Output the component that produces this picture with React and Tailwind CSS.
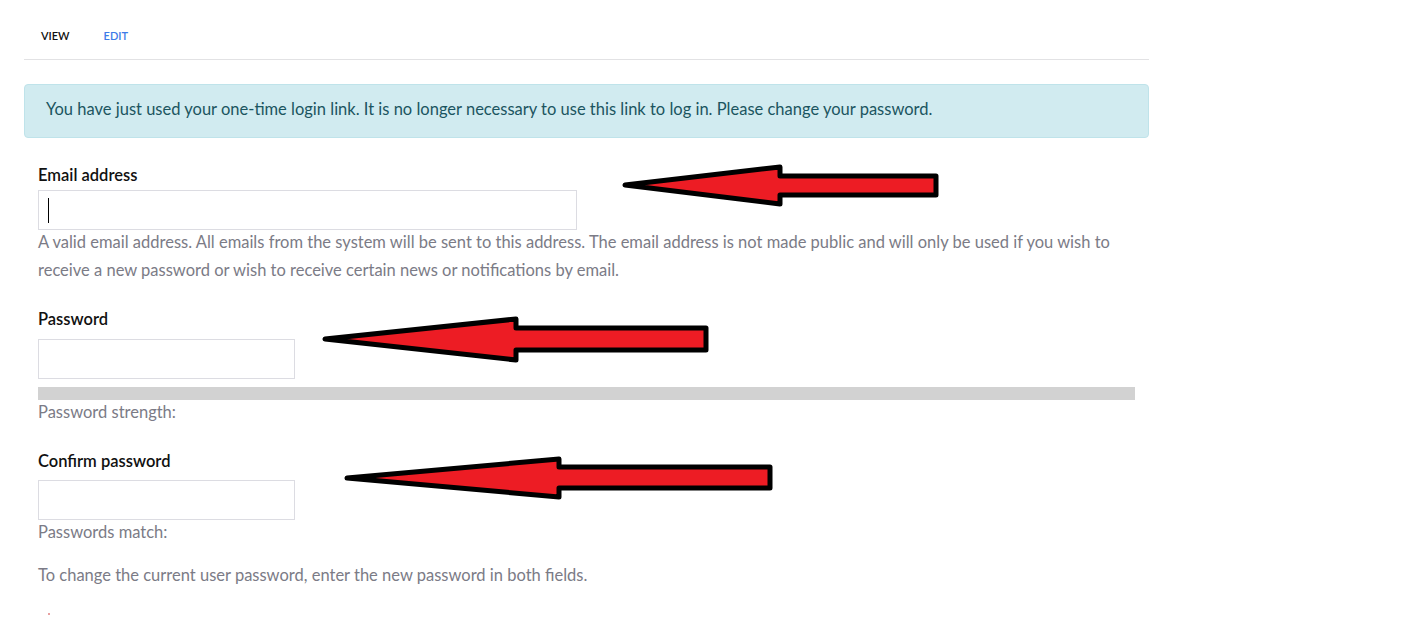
import React from "react";

function Arrow({ tipX, tipY, headX, headTop, headBot, shaftTop, shaftBot, endX }) {
  const d = `M ${tipX} ${tipY} L ${headX} ${headTop} L ${headX} ${shaftTop} L ${endX} ${shaftTop} L ${endX} ${shaftBot} L ${headX} ${shaftBot} L ${headX} ${headBot} Z`;
  return <path d={d} fill="#ed1c24" stroke="#000" strokeWidth="5" strokeLinejoin="round" />;
}

export default function App() {
  const font = { fontFamily: "Lato, 'Liberation Sans', sans-serif" };
  return (
    <div className="relative w-[1403px] h-[617px] overflow-hidden bg-white" style={font}>
      <div className="ml-[24px] w-[1125px]">
        <div className="flex h-[60px] items-center gap-[34px] border-b border-[#e2e2e4] pl-[17px] pt-[14px] text-[11px] font-semibold uppercase">
          <span className="text-[#111]">View</span>
          <span className="text-[#3d7be8]">Edit</span>
        </div>
        <div className="mt-[24px] flex h-[54px] items-center rounded-[4px] border border-[#bfe3ea] bg-[#d1ebf0] px-[21px] pb-[3px] text-[16.5px] text-[#1b5560]">
          You have just used your one-time login link. It is no longer necessary to use this link to log in. Please change your password.
        </div>
        <div className="px-[14px]">
          <div className="mt-[25px] text-[16.5px] font-semibold leading-[24px] text-[#111]">Email address</div>
          <div className="mt-[3px] flex h-[40px] w-[539px] items-center border border-[#dcdce2] bg-white pl-[9px]">
            <div className="h-[25px] w-[1px] bg-black" />
          </div>
          <div className="-mt-[2px] text-[16.5px] leading-[28px] text-[#7b7b86]">
            A valid email address. All emails from the system will be sent to this address. The email address is not made public and will only be used if you wish to receive a new password or wish to receive certain news or notifications by email.
          </div>

          <div className="mt-[23px] text-[16.5px] font-semibold leading-[24px] text-[#111]">Password</div>
          <div className="mt-[8px] h-[40px] w-[257px] border border-[#dcdce2] bg-white" />
          <div className="mt-[8px] h-[13px] w-full bg-[#d2d2d2]" />
          <div className="text-[16.5px] leading-[24px] text-[#7b7b86]">Password strength:</div>

          <div className="mt-[25px] text-[16.5px] font-semibold leading-[24px] text-[#111]">Confirm password</div>
          <div className="mt-[7px] h-[40px] w-[257px] border border-[#dcdce2] bg-white" />
          <div className="text-[16.5px] leading-[24px] text-[#7b7b86]">Passwords match:</div>

          <div className="mt-[19px] text-[16.5px] leading-[24px] text-[#7b7b86]">
            To change the current user password, enter the new password in both fields.
          </div>
          <div className="mt-[26px] ml-[10px] h-[2px] w-[2px] bg-[#e8a0a0]" />
        </div>
      </div>
      <svg className="pointer-events-none absolute left-0 top-0" width="1403" height="617">
        <Arrow tipX={625} tipY={185} headX={780} headTop={167} headBot={204} shaftTop={176} shaftBot={195} endX={936} />
        <Arrow tipX={325} tipY={339} headX={516} headTop={319} headBot={360} shaftTop={328} shaftBot={350} endX={706} />
        <Arrow tipX={347} tipY={478} headX={559} headTop={459} headBot={497} shaftTop={467} shaftBot={488} endX={770} />
      </svg>
    </div>
  );
}
